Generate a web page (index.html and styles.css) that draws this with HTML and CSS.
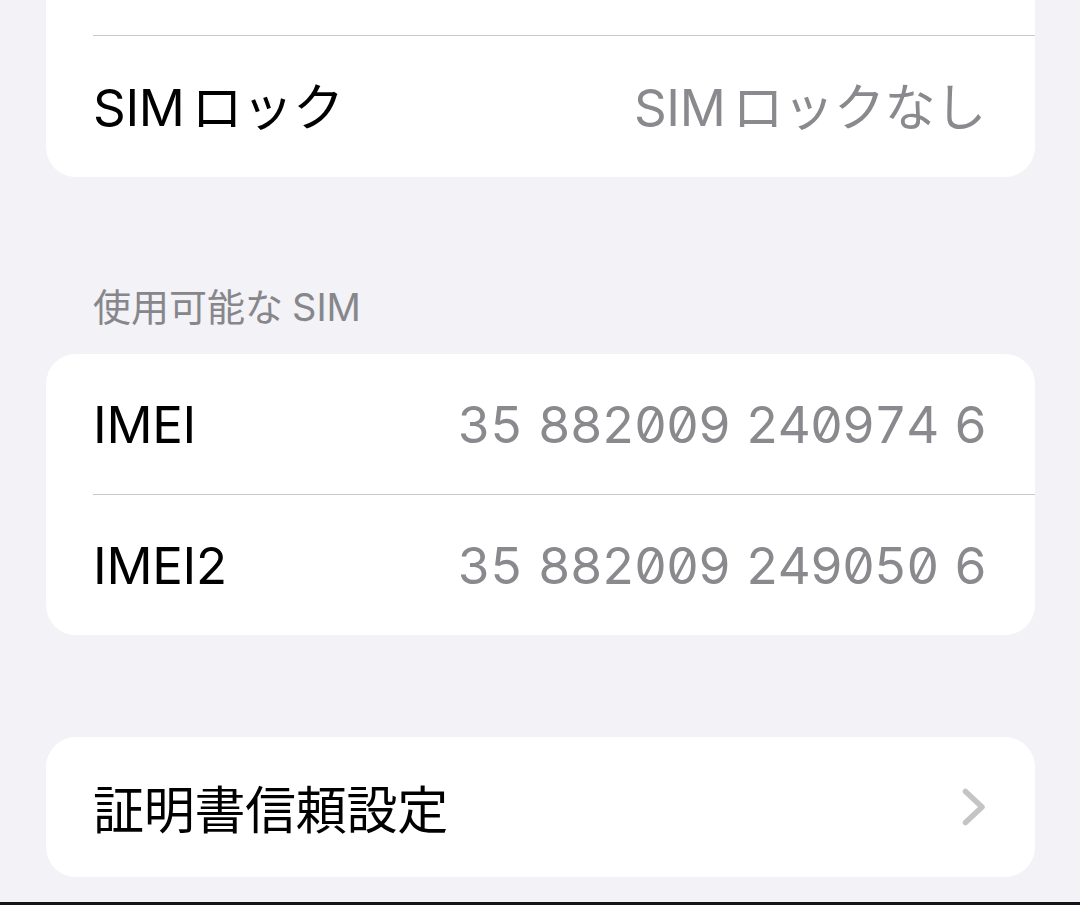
FILE: index.html
```html
<!DOCTYPE html>
<html lang="ja">
<head>
<meta charset="utf-8">
<link rel="stylesheet" href="styles.css">
</head>
<body>
<div class="screen">
  <div class="group group-top">
    <div class="spacer"></div>
    <div class="row sep">
      <span class="label"><span class="latin">SIM</span>ロック</span>
      <span class="value"><span class="latin">SIM</span>ロックなし</span>
    </div>
  </div>

  <div class="header">使用可能な<span class="latin-h">SIM</span></div>

  <div class="group group-imei">
    <div class="row">
      <span class="label">IMEI</span>
      <span class="value num">35 882009 240974 6</span>
    </div>
    <div class="row sep">
      <span class="label">IMEI2</span>
      <span class="value num">35 882009 249050 6</span>
    </div>
  </div>

  <div class="group group-cert">
    <div class="row">
      <span class="label">証明書信頼設定</span>
      <svg class="chevron" width="24" height="38" viewBox="0 0 24 38" aria-hidden="true">
        <path d="M3.5 3.5 L20 19 L3.5 34.5" fill="none" stroke="#c4c4c7" stroke-width="5.5" stroke-linecap="round" stroke-linejoin="round"/>
      </svg>
    </div>
  </div>

  <div class="bottom-bar"></div>
</div>
</body>
</html>
```

FILE: styles.css
```css
html, body {
  margin: 0;
  padding: 0;
}

body {
  background: #f2f2f7;
  font-family: Inter, "Noto Sans CJK JP", sans-serif;
  color: #000;
  width: 1080px;
  height: 905px;
  overflow: hidden;
}

.screen {
  display: flex;
  flex-direction: column;
  height: 905px;
}

.group {
  background: #fff;
  margin: 0 45px 0 46px;
  border-radius: 30px;
}

.group-top {
  border-radius: 0 0 30px 30px;
}

.spacer {
  height: 35px;
}

.row {
  display: flex;
  align-items: center;
  justify-content: space-between;
  height: 140px;
  padding: 0 49px 0 47px;
}

.group-top .row {
  height: 142px;
  padding-bottom: 6px;
  box-sizing: border-box;
}

.row.sep {
  border-top: 1px solid #c8c8cb;
  margin-left: 47px;
  padding-left: 0;
}

.label {
  font-size: 51px;
  letter-spacing: -0.3px;
}

.value {
  font-size: 51px;
  color: #8a8a8e;
  letter-spacing: -0.3px;
}

.latin {
  margin-right: 7px;
}

.latin-h {
  margin-left: 9px;
}

.num {
  font-feature-settings: "tnum" 1, "zero" 1;
  font-variant-numeric: tabular-nums slashed-zero;
  letter-spacing: -1px;
  word-spacing: 3px;
}

.header {
  margin: 107px 0 23px 93px;
  font-size: 38px;
  line-height: 47px;
  color: #87878b;
}

.group-cert {
  margin-top: 102px;
}

.chevron {
  display: block;
}

.bottom-bar {
  margin-top: auto;
  height: 3px;
  background: #141416;
}
```
